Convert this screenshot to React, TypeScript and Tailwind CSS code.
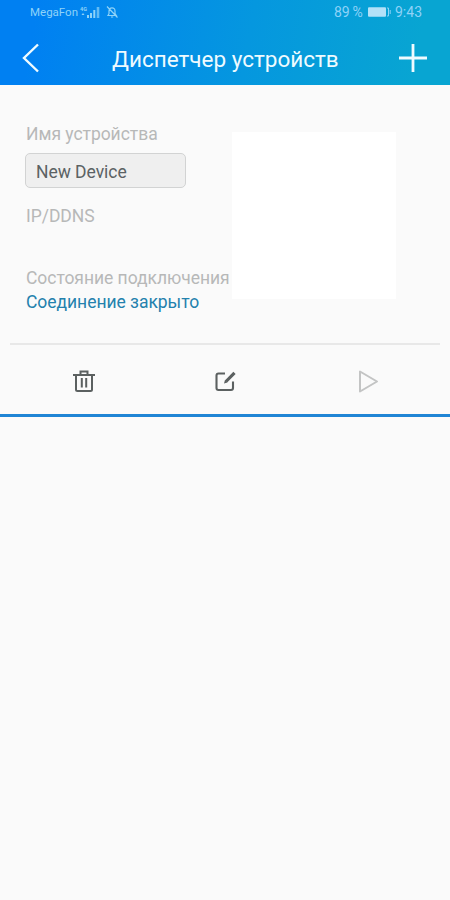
function StatusBar() {
  return (
    <div className="flex h-6 items-center justify-between pr-[26px] pl-[30px] text-[#8fd3f8]">
      <div className="flex items-center">
        <span className="w-[48px] text-[11.5px] leading-6 whitespace-nowrap">
          MegaFon
        </span>
        <svg width="22" height="14" viewBox="0 0 22 14" fill="currentColor" className="ml-[1px]">
          <text x="1" y="5.5" fontSize="5.5" fontWeight="700">
            4G
          </text>
          <path d="M4 8l-1.5 2h3zM8 10h2v3H8zM11 8h2v5h-2zM14.3 5h2v8h-2z" />
          <path d="M17.7 2h2.6v11h-2.6z" opacity="0.7" />
        </svg>
        <svg
          width="14"
          height="14"
          viewBox="0 0 14 14"
          fill="none"
          stroke="currentColor"
          strokeWidth="1.2"
          className="ml-[4px]"
        >
          <path d="M3 10.5h8.2L10 8.7V6c0-2-1.2-3.2-3-3.2S4 4 4 6v2.7zM6 12h2.2M2 1.5l10.5 11" />
        </svg>
      </div>
      <div className="flex items-center leading-6 whitespace-nowrap">
        <span className="w-[31px] text-[14px] tracking-[-0.2px]">89 %</span>
        <svg width="24" height="12" viewBox="0 0 24 12" className="ml-[2px]">
          <rect x="1" y="1.2" width="18" height="9.6" rx="1" fill="#b3e1f8" />
          <path d="M20 2h1.5v8H20M23.2 4v4" fill="none" stroke="currentColor" />
        </svg>
        <span className="ml-[4px] w-[29px] text-[14px]">9:43</span>
      </div>
    </div>
  );
}

function Header() {
  return (
    <header className="h-[85px] bg-[linear-gradient(100deg,#0080f2_8%,#0597df_55%,#08a5d2_92%)] text-[#effbff]">
      <StatusBar />
      <div className="flex h-[61px] items-center pb-[7px] pl-[21px]">
        <button aria-label="Назад" className="mt-[14px]">
          <svg width="20" height="30" viewBox="0 0 20 30" fill="none" stroke="currentColor" strokeWidth="2.4">
            <path d="M17 1.5L3 15l14 13.5" />
          </svg>
        </button>
        <h1 className="mt-[15px] ml-[71px] w-[286px] text-[22.5px] leading-7 whitespace-nowrap">
          Диспетчер устройств
        </h1>
        <button aria-label="Добавить" className="mt-[14px]">
          <svg width="30" height="30" viewBox="0 0 30 30" fill="none" stroke="currentColor" strokeWidth="2.8">
            <path d="M15 1v28M1 15h28" />
          </svg>
        </button>
      </div>
    </header>
  );
}

function DeviceCard() {
  return (
    <section className="h-[332px] border-b-[3px] border-[#2085d5]">
      <div className="flex h-[258px] pt-[37px] pl-[25px] text-[17.5px] tracking-[-0.04px] text-[#b7b8b8]">
        <div className="w-[207px] shrink-0 whitespace-nowrap">
          <p className="pl-[1px] leading-6">Имя устройства</p>
          <div className="mt-[7px] h-[35px] w-[161px] rounded-[5px] border-[1.5px] border-[#d2d3d3] bg-[#efefef] pl-[10px] leading-[36px] text-[#5b6264]">
            New Device
          </div>
          <p className="mt-[16px] pl-[1px] leading-6">IP/DDNS</p>
          <p className="mt-[38px] pl-[1px] leading-6">Состояние подключения</p>
          <p className="pl-[1px] leading-6 text-[#2381ad]">Соединение закрыто</p>
        </div>
        <div className="mt-[10px] h-[167px] w-[164px] bg-white" />
      </div>
      <div className="mx-[10px] h-[2px] bg-[#e8e8e8]" />
      <div className="flex h-[69px] items-center pt-[3px]">
        <button aria-label="Удалить" className="ml-[72px]">
          <svg width="24" height="24" viewBox="0 0 24 24" fill="none" stroke="#5b6060" strokeWidth="2">
            <path d="M1 6h22M8.5 5.5V2.5h7v3M4 6v14.5q0 1.5 1.5 1.5h13q1.5 0 1.5-1.5V6M9.8 9v9.5M14.2 9v9.5" />
          </svg>
        </button>
        <button aria-label="Изменить" className="ml-[117px]">
          <svg width="24" height="24" viewBox="0 0 24 24" fill="none" stroke="#5b6060" strokeWidth="2.1">
            <path d="M12 4.5H5.5Q3.5 4.5 3.5 6.5v12.5q0 2 2 2H18q2 0 2-2v-6.5" />
            <path d="M13 12.5l8.5-8.7" strokeWidth="3.2" />
            <path d="M11 14.5l1-3.4 2.4 2.4z" fill="#5b6060" stroke="none" />
          </svg>
        </button>
        <button aria-label="Воспроизвести" className="ml-[119px]">
          <svg width="24" height="24" viewBox="0 0 24 24" fill="none" stroke="#c3c4c4" strokeWidth="2" strokeLinejoin="round">
            <path d="M4 2.5v20l17-10z" />
          </svg>
        </button>
      </div>
    </section>
  );
}

export default function App() {
  return (
    <main className="h-[900px] w-[450px] overflow-hidden bg-[#fafafa] font-['Roboto',sans-serif]">
      <Header />
      <DeviceCard />
    </main>
  );
}
